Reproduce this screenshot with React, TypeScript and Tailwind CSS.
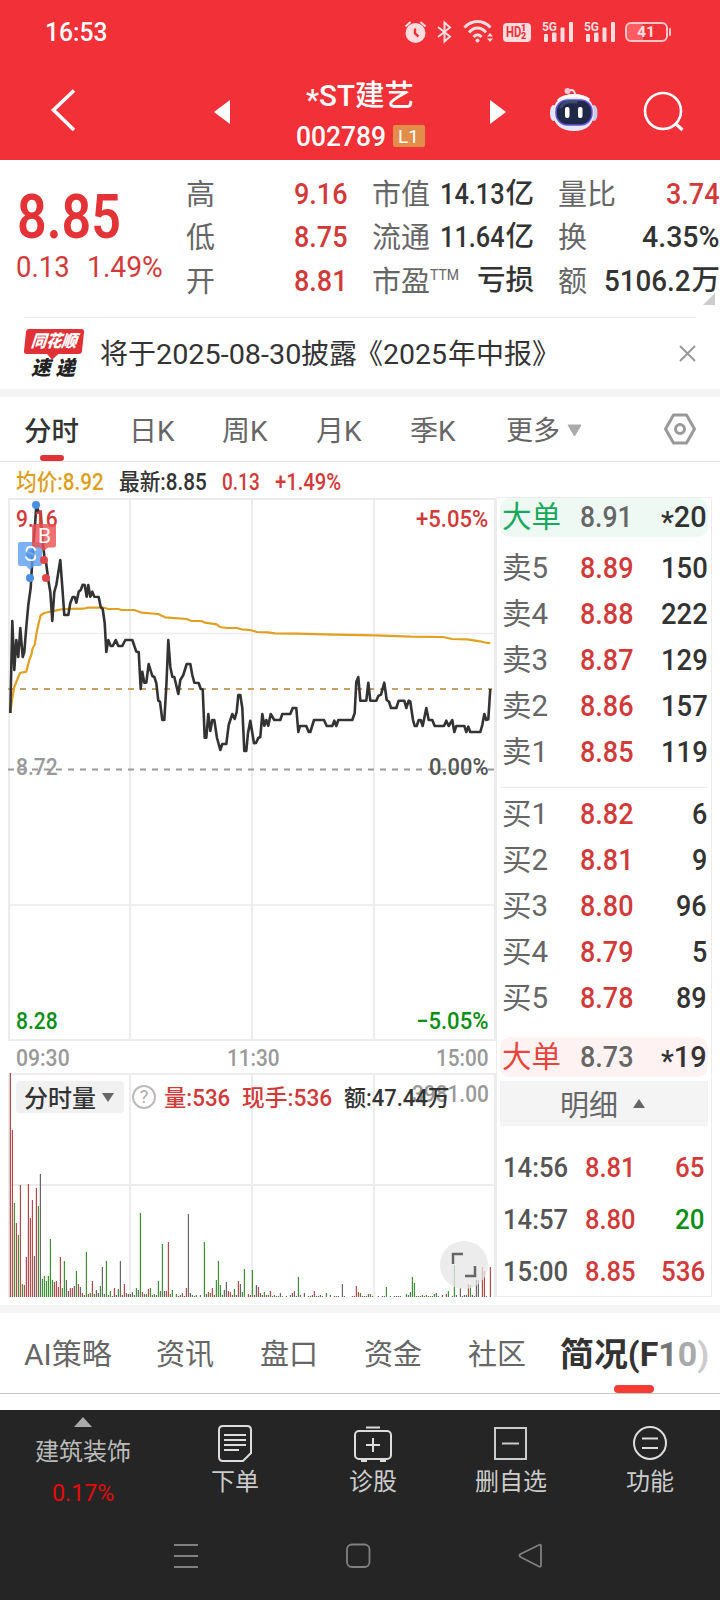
import { useLayoutEffect, useRef, type ReactNode } from "react";
import clsx from "clsx";

const RED = "text-[#d23a3a]";
const DARK = "text-[#333]";
const GREEN = "text-[#0b8f14]";

// Squeezes a piece of text into a fixed width, like the condensed digits of trading terminals
function Fit({ w, className, children }: { w: number; className?: string; children: ReactNode }) {
  const ref = useRef<HTMLSpanElement>(null);

  useLayoutEffect(() => {
    const el = ref.current;
    if (el) el.style.transform = `scaleX(${w / el.offsetWidth})`;
  }, [w, children]);

  return (
    <span className={clsx("inline-block shrink-0 whitespace-nowrap", className)} style={{ width: w }}>
      <span ref={ref} className="inline-block origin-left">
        {children}
      </span>
    </span>
  );
}

function Star() {
  return <span className="relative top-[0.15em]">*</span>;
}

function Signal() {
  return (
    <svg className="overflow-visible" width="32" height="24" viewBox="0 0 32 24" fill="#ffdcde">
      <text x="0" y="11" fontSize="13.5" fontWeight="700" textLength="15" lengthAdjust="spacingAndGlyphs">
        5G
      </text>
      <rect x="2" y="14" width="4" height="8" rx="1" />
      <rect x="10" y="12.500" width="4.500" height="9.500" rx="1" />
      <rect x="18.500" y="7.500" width="4" height="14.500" rx="1" />
      <rect x="27" y="2" width="4" height="20" rx="1" />
    </svg>
  );
}

function StatusBar() {
  return (
    <div className="flex h-16 items-center pl-[45px] text-white">
      <Fit w={62} className="pt-0.5 text-[25px] font-medium">16:53</Fit>
      <div className="ml-[297px] flex items-center">
        <svg width="23" height="24" viewBox="0 0 23 24" fill="none" stroke="#ffdcde">
          <circle cx="11.500" cy="13" r="10" fill="#ffdcde" stroke="none" />
          <path d="M1.500 6.500 6.500 2M21.500 6.500 16.500 2" strokeWidth="2.200" />
          <path d="M11 8.500V13.500L14.500 16.500" stroke="#f23038" strokeWidth="2.400" />
        </svg>
        <svg className="ml-[9px]" width="17" height="24" viewBox="0 0 17 24" fill="none" stroke="#ffdcde" strokeWidth="2">
          <path d="M2 7 14 16.500 8.500 21.500V2.500L14 7.500 2 17" />
        </svg>
        <svg className="ml-2.5" width="32" height="24" viewBox="0 0 32 24" fill="none" stroke="#ffdcde" strokeWidth="3">
          <path d="M1.500 7.500C9-.5 20-.5 27.500 7.500M6 12.500C11 6.500 18 6.500 23 12.500M10.500 17C13 14 16 14 18.500 17" />
          <circle cx="14.500" cy="20.500" r="2" fill="#ffdcde" stroke="none" />
          <path d="M24 16.500 27 13 30 16.500ZM24 18.500 27 22 30 18.500Z" fill="#ffdcde" stroke="none" />
        </svg>
        <div className="ml-2 flex h-[19px] w-7 items-center rounded bg-[#ffdcde] pl-[3px] text-[#f23038]">
          <Fit w={15} className="text-[15px] font-bold leading-none">HD</Fit>
          <span className="flex flex-col text-[9px] font-black leading-[8px]">
            <span>1</span>
            <span>2</span>
          </span>
        </div>
        <div className="ml-[11px] flex gap-2.5">
          <Signal />
          <Signal />
        </div>
        <div className="ml-[9px] flex items-center">
          <div className="flex h-5 w-[43px] items-center rounded-md border-2 border-[#ffc4c7] bg-linear-to-r from-[#ff5c63] from-40% to-transparent to-40% pl-2.5">
            <Fit w={18} className="text-[15px] font-bold leading-none text-[#ffdcde]">41</Fit>
          </div>
          <div className="ml-px h-2 w-0.5 rounded bg-[#ffc4c7]" />
        </div>
      </div>
    </div>
  );
}

function Robot() {
  return (
    <svg width="50" height="46" viewBox="0 0 50 46" fill="none">
      <path d="M20 3.500C24 2 26 4 26 8" stroke="#ffe4ea" strokeWidth="2" />
      <circle cx="18.500" cy="4" r="3" fill="#ffc8d4" />
      <ellipse cx="4.500" cy="26" rx="3.500" ry="8" fill="#e4e6ff" />
      <ellipse cx="45" cy="26" rx="3.500" ry="8" fill="#c9c8f6" />
      <path d="M25 7C38 7 45 15 45 26S38 44 25 44 4 37 4 26 12 7 25 7Z" fill="#e6e8fb" />
      <path d="M9 14C15 7.500 33 7 40 13" stroke="#fff" strokeWidth="3" />
      <rect x="7" y="13" width="36" height="25" rx="11.500" fill="#1f2947" stroke="#6552d8" strokeWidth="1.500" />
      <path d="M12 20C14 15 20 14 27 15" stroke="#3d4c6e" strokeWidth="3" strokeLinecap="round" />
      <rect x="16" y="20" width="4.500" height="11" rx="2" fill="#fff" />
      <rect x="29" y="20" width="4.500" height="11" rx="2" fill="#fff" />
    </svg>
  );
}

function TitleBar() {
  return (
    <div className="flex h-24 items-start text-white">
      <svg className="mt-6 ml-[50px]" width="26" height="44" viewBox="0 0 26 44" fill="none" stroke="#fff" strokeWidth="3.600">
        <path d="M24 2.500 3.500 22 24 42" />
      </svg>
      <svg className="mt-9 ml-[138px]" width="16" height="24" viewBox="0 0 16 24" fill="#fff">
        <path d="M16 0V24L0 12Z" />
      </svg>
      <div className="flex w-[260px] flex-col items-center">
        <div className="mt-[14px] text-[29px] leading-9 font-medium">
          <Fit w={108}>
            <Star />
            ST建艺
          </Fit>
        </div>
        <div className="mt-2 flex h-7 items-center">
          <Fit w={90} className="pt-0.5 text-[27px] leading-none font-medium">002789</Fit>
          <span className="ml-[7px] flex h-[22px] w-8 items-center justify-center rounded-xs bg-[#e38d4b] text-[19px] leading-none">
            L1
          </span>
        </div>
      </div>
      <svg className="mt-9" width="16" height="24" viewBox="0 0 16 24" fill="#fff">
        <path d="M0 0V24L16 12Z" />
      </svg>
      <div className="mt-[23px] ml-[43px]">
        <Robot />
      </div>
      <svg className="mt-[26px] ml-[44px]" width="42" height="42" viewBox="0 0 42 42" fill="none" stroke="#fff" strokeWidth="2.600">
        <circle cx="20" cy="21" r="18" />
        <path d="M32.500 33.500 39.500 40" strokeWidth="3.200" />
      </svg>
    </div>
  );
}

type Cell = { label: string; sup?: string; num?: string; w?: number; unit?: string; red?: boolean };

const quoteColumns: Cell[][] = [
  [
    { label: "高", num: "9.16", w: 54, red: true },
    { label: "低", num: "8.75", w: 54, red: true },
    { label: "开", num: "8.81", w: 54, red: true },
  ],
  [
    { label: "市值", num: "14.13", w: 65, unit: "亿" },
    { label: "流通", num: "11.64", w: 65, unit: "亿" },
    { label: "市盈", sup: "TTM", unit: "亏损" },
  ],
  [
    { label: "量比", num: "3.74", w: 54, red: true },
    { label: "换", num: "4.35%", w: 78 },
    { label: "额", num: "5106.2", w: 87, unit: "万" },
  ],
];

function Quote() {
  return (
    <div className="relative flex h-[157px] pl-4">
      <div className="w-[170px] pt-6">
        <Fit w={104} className="ml-px text-[62px] leading-[66px] font-semibold text-[#e33337]">8.85</Fit>
        <div className={clsx("-mt-px flex gap-[17px] text-[29px] leading-9", RED)}>
          <Fit w={54}>0.13</Fit>
          <Fit w={76}>1.49%</Fit>
        </div>
      </div>
      <div className="flex gap-6 pt-3">
        {quoteColumns.map((cells, i) => (
          <div key={i} className="w-[162px]">
            {cells.map((c) => (
              <div key={c.label} className="flex h-[43.5px] items-center justify-between text-[29px] leading-none">
                <span className="flex pt-[3px] text-[#666]">
                  {c.label}
                  {c.sup && <Fit w={29} className="text-[15px] leading-none">{c.sup}</Fit>}
                </span>
                <span className={clsx("flex items-center font-medium", c.red ? RED : DARK)}>
                  {c.num && <Fit w={c.w ?? 54} className="text-[30px]">{c.num}</Fit>}
                  <span className="text-[28.5px]">{c.unit}</span>
                </span>
              </div>
            ))}
          </div>
        ))}
      </div>
      <svg className="absolute top-[133px] right-[5px]" width="12" height="12" viewBox="0 0 12 12" fill="#ccc">
        <path d="M12 0V12H0Z" />
      </svg>
    </div>
  );
}

function News() {
  return (
    <div className="mx-6 flex h-[72px] items-center border-t border-[#ebebeb]">
      <div className="flex w-[60px] flex-col pl-px">
        <div className="relative flex h-[25px] w-[58px] -skew-x-6 items-center justify-center rounded-[3px] bg-[#e03236]">
          <Fit w={46} className="text-[17px] leading-none font-black text-white italic">同花顺</Fit>
          <span className="absolute -bottom-1 left-[25px] size-2 rotate-45 bg-[#e03236]" />
        </div>
        <Fit w={44} className="mt-1 ml-1.5 text-[20px] leading-5 font-black text-[#222] italic">速 递</Fit>
      </div>
      <span className="ml-4 flex pt-[3px] text-[28px] leading-none text-[#333]">
        将于<Fit w={145}>2025-08-30</Fit>披露<span className="-ml-0.5">《</span>
        <Fit w={64}>2025</Fit>
        <span className="pl-px">年中报》</span>
      </span>
      <svg className="ml-auto" width="17" height="17" viewBox="0 0 17 17" stroke="#999" strokeWidth="2">
        <path d="M1 1 16 16M16 1 1 16" />
      </svg>
    </div>
  );
}

function PeriodTabs() {
  return (
    <div className="relative flex h-[65px] items-center border-b border-[#e6e6e6] pt-0.5 pl-6 text-[28px] leading-none text-[#666]">
      <span className="w-[105px] pt-[3px] text-[27.5px] font-medium text-[#333]">分时</span>
      <span className="w-[93px] pt-[3px]">日K</span>
      <span className="w-[94px] pt-[3px]">周K</span>
      <span className="w-[94px] pt-[3px]">月K</span>
      <span className="w-[96px] pt-[3px]">季K</span>
      <span className="pt-[3px] text-[27px]">更多</span>
      <svg className="ml-[7px]" width="15" height="13" viewBox="0 0 15 13" fill="#aaa" stroke="#aaa" strokeLinejoin="round">
        <path d="M1 1H14L7.500 12Z" />
      </svg>
      <svg className="mr-6 mb-0.5 ml-auto" width="32" height="32" viewBox="0 0 32 32" fill="none" stroke="#999" strokeWidth="3" strokeLinejoin="round">
        <path d="M9.500 2H22.500L30.500 16 22.500 30H9.500L1.500 16Z" />
        <circle cx="16" cy="16" r="4.500" />
      </svg>
      <span className="absolute bottom-0 left-10 h-1.5 w-6 rounded-full bg-[#e03236]" />
    </div>
  );
}

// Minute prices and running average, in chart coordinates
const pricePoints =
  "10.3,713 12.3,621 14.3,670 16.3,640 18.3,657 20.3,628 22.7,657 24.3,652 26.3,627 28.3,605 30.7,588 32.7,553 34.7,530 36.3,505 38.7,512 40.7,512 42.3,537 44.3,556 46,562 48.3,580 50.3,592 52.3,621 54.3,592 56.3,585 60.3,560 62.3,587 64.3,615 68.3,615 70.3,603 72.7,597 74.7,597 76.3,602.7 78.7,591.7 80.7,590 82.7,584.7 84.7,585 86.7,596.7 88.3,585 90.3,596.7 92.3,591.7 94.3,596.7 98.7,597 100.7,607 102.7,609 104.7,623 106.3,652 108.3,640 110.7,646 112.7,646 115.7,640 118.3,646 122.3,646 125.3,640 132.3,640 136.3,651.7 138.7,652 140.7,689 142.3,671.7 144.3,682.7 146.3,682.7 148.7,664 152.3,676 154.3,677 156.3,683 158.3,700.7 160,701.7 162.3,720 164.3,720 166.3,686.7 168.3,640 170.3,666.7 172.3,676.7 174.3,677 178.3,694 180.3,680 183.3,675 186.7,664 190.3,664 192.3,675 194.3,682.7 198.7,683 200.7,689 202.7,689.3 204.7,737.7 206.3,737.7 208.3,714 210.3,731 212.3,720 214.3,720 217,738 220.3,750 222.3,744 226.3,744 228.7,725 232.3,714 234.7,719 236.7,711.7 238.3,695 240.3,695 242.3,708 244.3,751 246.3,751 248,733 250.3,720.7 254,743.3 256,743 258.3,738 260.3,737 262.3,714 264.3,725.7 266.3,720 268.3,725.7 270.7,714 274.3,720 280.3,720 282.3,714 290.3,714 292.7,708 296.3,708 298.3,732 300,726 306.3,726 308.7,732 310.3,732 314,720 324,720 326.7,726 332.3,726 334.3,720.7 336.3,726 338.3,720 352.3,720 354.7,713 356.3,681.7 358.3,677 360.3,700.7 366.3,700.7 368.3,682.7 370.3,700.7 376.3,700.7 378.3,696 381,694.7 384.3,682.7 386.7,700 389,701.7 391,708 396.3,708 398.7,700.7 404.3,700.7 406.3,708 408.7,700.7 410.3,701.7 413,720 414.7,726 416.7,726 418.7,720 420.7,720 422.7,726 426.3,708 428.7,720 432.3,720 434.7,726 444,726 446.3,720.7 448.7,726 452.3,720 454.3,732 456.3,726 464.3,726 466.3,732 468.3,726.7 470.3,732 480.3,732 482.3,725 484.3,714 486.3,720 488.3,719.3 490.3,689";
const averagePoints =
  "10.3,713 12.3,698 14.3,687 16.3,682 20,673 26.3,671.7 29.3,660 31.3,655 32.7,648 34.7,645 36.7,632 38.7,623 40.7,615.3 44.3,613 51.7,611.3 63.3,609 83.3,608.7 87.3,607.7 104,607.7 108.3,609 118.3,609 121.7,610 134.3,610 141.7,612.7 158.3,614 165,617.3 186.7,619 191.7,621 201.7,621 205,622.7 216.7,624.3 220,627 226.7,628 236.7,628 241.7,629.3 250,630 257,632 268,632.3 275,633.3 297,633.7 334,634.7 375,635.3 411,636.7 443,637 452,639 467,639.3 480,641.3 487,643 490.3,643";

function PriceChart() {
  return (
    <div className="relative h-[544px] text-[23px] leading-6">
      <svg className="block" width="496" height="544" viewBox="0 497 496 544" fill="none">
        <g stroke="#ececec" strokeWidth="2">
          <path d="M8 499H496M8 1040H496M9 499V1041M495 499V1041M130 499V1041M252 499V1041M374 499V1041" />
          <path d="M9 633.500H495M9 905H495" strokeWidth="1.500" />
        </g>
        <path d="M8 769.500H495" stroke="#999" strokeWidth="1.800" strokeDasharray="6 6" />
        <path d="M8 689H492" stroke="#c9a063" strokeWidth="1.800" strokeDasharray="6 6" />
        <polyline points={averagePoints} stroke="#e0a020" strokeWidth="2.200" strokeLinejoin="round" />
        <polyline points={pricePoints} stroke="#333" strokeWidth="2.600" strokeLinejoin="round" />
      </svg>
      <Fit w={42} className={clsx("absolute top-[11px] left-4 font-medium", RED)}>9.16</Fit>
      <Fit w={72} className={clsx("absolute top-[11px] right-2 font-medium", RED)}>+5.05%</Fit>
      <Fit w={42} className="absolute top-[259px] left-4 font-medium text-[#999]">8.72</Fit>
      <Fit w={60} className="absolute top-[259px] right-[7px] font-medium text-[#555]">0.00%</Fit>
      <Fit w={42} className={clsx("absolute top-[513px] left-4 font-medium", GREEN)}>8.28</Fit>
      <Fit w={72} className={clsx("absolute top-[513px] right-2 font-medium", GREEN)}>−5.05%</Fit>
      {/* Buy and sell markers */}
      <svg className="absolute top-0 left-0" width="70" height="90" viewBox="0 497 70 90">
        <path d="M20 542H40Q42 542 42 544V564Q42 566 40 566H34L30 570 26 566H20Q18 566 18 564V544Q18 542 20 542Z" fill="#5b9df0" fillOpacity=".8" />
        <path d="M34 524H54Q56 524 56 526V545Q56 547.500 54 547.500H48L44 551 40 547.500H34Q32 547.500 32 545V526Q32 524 34 524Z" fill="#eb5054" fillOpacity=".82" />
        <g fill="#4a90e2">
          <circle cx="36" cy="505" r="4" />
          <circle cx="30" cy="578" r="4" />
        </g>
        <g fill="#e0454a">
          <circle cx="44" cy="560" r="4" />
          <circle cx="46" cy="578" r="4" />
        </g>
        <text x="44.500" y="543" fontSize="21" fill="#fff" textAnchor="middle">B</text>
        <text x="30.500" y="561" fontSize="21" fill="#fff" textAnchor="middle">S</text>
        <circle cx="30.500" cy="554" r="4.500" fill="#4a90e2" fillOpacity=".75" />
      </svg>
    </div>
  );
}

// Minute volumes: r up, g down, k flat, followed by the bar height
const volumes =
  "r224 r167 g94 r74 g62 r112 g13 r12 r40 r113 r79 r97 k41 r109 g91 k123 g18 g21 g16 g21 g58 g17 r15 r16 r10 r40 g9 g36 k17 k6 r9 r9 k11 g26 r13 k10 r4 k2 g45 r3 g4 r16 g3 k7 k4 g11 k30 g3 g36 r2 g6 k1 r9 k2 g8 k36 r2 r13 k4 k3 k3 k5 g2 g9 k7 g84 r5 k3 g3 r8 g9 g2 g3 k2 g16 k6 g53 k6 r6 r55 g3 g7 k0 g3 r1 r2 k4 r1 r9 k83 k4 g2 k1 g2 k0 g2 k0 g55 k3 r5 g4 r9 r2 g17 g36 g12 g2 k7 k15 r6 r5 k2 g8 k2 r16 k13 g5 g28 k0 r3 r2 g27 r2 k12 r10 k4 r2 g5 r2 g2 r6 r1 g2 g1 g1 k4 g1 k0 r1 k0 k2 r4 k6 k1 g20 r2 k0 k4 k0 g1 g1 r2 r6 k1 k1 k2 k1 k0 g4 k0 k2 k0 r1 g1 r1 k0 k13 k1 k0 k0 k0 r1 r1 r11 r5 g4 k1 k1 k1 r3 g3 k1 k0 k0 r1 k0 r1 r1 g10 k0 g1 k0 k1 k1 k1 k1 k0 k0 g3 g2 k5 g20 g14 g1 r1 g1 r2 g1 g2 r1 g1 g1 g3 k4 g1 k0 k2 k0 r3 g6 k0 r1 g32 k2 k0 k9 k1 k2 g2 r13 g12 k2 r1 k17 k17 k0 r30 r26 g1 k0 r30".split(" ");

const barColors: Record<string, string> = { r: "#b8484a", g: "#3d9236", k: "#666" };

function VolumeChart() {
  return (
    <div className="relative h-[225px] text-[23px] leading-6">
      <svg className="block" width="496" height="225" viewBox="0 1072 496 225" fill="none">
        <path d="M8 1074H496M9 1185H495M9 1074V1297M495 1074V1297M130 1074V1297M252 1074V1297M374 1074V1297" stroke="#ececec" strokeWidth="2" />
        {volumes.map((v, i) => (
          <rect
            key={i}
            x={9.8 + i * 2}
            y={1297 - Number(v.slice(1))}
            width="1.200"
            height={Number(v.slice(1))}
            fill={barColors[v[0]]}
          />
        ))}
      </svg>
      <Fit w={77} className="absolute top-[11px] right-[7px] font-medium text-[#999]">3981.00</Fit>
      <div className="absolute top-[9px] left-4 flex items-center font-medium">
        <div className="flex h-8 w-[108px] items-center rounded bg-[#f1f1f1] pl-2 text-[24px] text-[#333]">
          <span className="pt-[3px]">分时量</span>
          <svg className="ml-[6px]" width="12" height="9" viewBox="0 0 12 9" fill="#666">
            <path d="M0 0H12L6 9Z" />
          </svg>
        </div>
        <span className="ml-2 flex size-6 items-center justify-center rounded-full border-2 border-[#bbb] text-[18px] leading-none font-normal text-[#aaa]">
          ?
        </span>
        <Fit w={66} className={clsx("ml-2 pt-[3px]", RED)}>量:536</Fit>
        <Fit w={90} className={clsx("ml-3 pt-[3px]", RED)}>现手:536</Fit>
        <Fit w={106} className="ml-3 pt-[3px] text-[#333]">额:47.44万</Fit>
      </div>
      <svg className="absolute top-[169px] left-[440px]" width="48" height="48" viewBox="0 0 48 48" fill="none">
        <circle cx="24" cy="24" r="24" fill="#e6e6e6" fillOpacity=".75" />
        <path d="M13 23V13H23M25 35H35V25" stroke="#666" strokeWidth="2.500" />
      </svg>
    </div>
  );
}

const asks = [["卖5", "8.89", "150"], ["卖4", "8.88", "222"], ["卖3", "8.87", "129"], ["卖2", "8.86", "157"], ["卖1", "8.85", "119"]];
const bids = [["买1", "8.82", "6"], ["买2", "8.81", "9"], ["买3", "8.80", "96"], ["买4", "8.79", "5"], ["买5", "8.78", "89"]];
const ticks = [["14:56", "8.81", "65"], ["14:57", "8.80", "20"], ["15:00", "8.85", "536"]];

function BookRow({ row }: { row: string[] }) {
  const [label, price, qty] = row;
  return (
    <div className="flex h-[46px] items-center pt-0.5 pr-px pl-0.5 text-[29.5px] leading-none">
      <span className="flex w-[78px] text-[#666]">
        {label[0]}
        <Fit w={17}>{label[1]}</Fit>
      </span>
      <Fit w={54} className={clsx("font-medium", RED)}>{price}</Fit>
      <Fit w={qty.length * 15.5} className={clsx("ml-auto font-medium", DARK)}>{qty}</Fit>
    </div>
  );
}

function OrderBook() {
  return (
    <div className="h-[800px] w-[216px] border border-[#ececec] pr-[3px] pl-[3px]">
      <div className="flex h-[39px] items-center rounded-[10px] bg-[#eff9f4] pt-px pr-px pl-0.5 text-[29.5px] leading-none">
        <span className="w-[78px] text-[#16a95c]">大单</span>
        <Fit w={53} className="font-medium text-[#666]">8.91</Fit>
        <Fit w={46} className={clsx("ml-auto font-medium", DARK)}>
          <Star />
          20
        </Fit>
      </div>
      <div className="pt-2">{asks.map((r) => <BookRow key={r[0]} row={r} />)}</div>
      <div className="mt-3 border-t border-[#ececec] pt-[3px]">{bids.map((r) => <BookRow key={r[0]} row={r} />)}</div>
      <div className="mt-4 flex h-10 items-center rounded-[10px] bg-[#fef3f2] pt-px pr-px pl-0.5 text-[29.5px] leading-none">
        <span className="w-[78px] text-[#e8443c]">大单</span>
        <Fit w={54} className="font-medium text-[#666]">8.73</Fit>
        <Fit w={46} className={clsx("ml-auto font-medium", DARK)}>
          <Star />
          19
        </Fit>
      </div>
      <div className="mt-1 flex h-[45px] items-center bg-[#f4f4f4] pl-[60px] text-[29px] leading-none text-[#666]">
        <span className="pt-1.5">明细</span>
        <svg className="ml-[15px]" width="12" height="9" viewBox="0 0 12 9" fill="#666">
          <path d="M6 0 12 9H0Z" />
        </svg>
      </div>
      <div className="pt-4">
        {ticks.map(([time, price, qty]) => (
          <div key={time} className="flex h-[52px] items-center pr-[3px] pl-[3px] text-[28px] leading-none">
            <Fit w={65} className="font-medium text-[#555]">{time}</Fit>
            <Fit w={51} className={clsx("ml-[17px] font-medium", RED)}>{price}</Fit>
            <Fit w={qty.length * 14.8} className={clsx("ml-auto font-medium", qty === "20" ? GREEN : RED)}>{qty}</Fit>
          </div>
        ))}
      </div>
    </div>
  );
}

function SectionTabs() {
  return (
    <div className="relative flex h-[81px] items-center border-b border-[#c8c8c8] pt-1 pl-6 text-[29px] leading-none text-[#666]">
      <span className="w-[132px]"><Fit w={88}>AI策略</Fit></span>
      <span className="w-[104px]">资讯</span>
      <span className="w-[104px]">盘口</span>
      <span className="w-[104px]">资金</span>
      <span className="w-[92px]">社区</span>
      {/* The last tab fades out towards the screen edge */}
      <Fit w={149} className="text-[33px] leading-10 font-bold text-[#333]">
        简况(F<span className="text-[#777]">1</span>
        <span className="text-[#aaa]">0</span>
        <span className="text-[#ccc]">)</span>
      </Fit>
      <span className="absolute bottom-0 left-[614px] h-2 w-10 rounded-full bg-[#f53b33]" />
    </div>
  );
}

function BottomBar() {
  return (
    <div className="h-[190px] bg-[#252525] text-[24px] leading-7 text-[#ccc]">
      <div className="flex h-[110px]">
        <div className="flex w-[166px] flex-col items-center pt-[7px]">
          <svg width="18" height="10" viewBox="0 0 18 10" fill="#aaa">
            <path d="M9 0 18 10H0Z" />
          </svg>
          <span className="mt-[11px] text-[#bbb]">建筑装饰</span>
          <Fit w={62} className="mt-[13px] text-[#e60a0a]">0.17%</Fit>
        </div>
        <div className="flex w-[138px] flex-col items-center pt-[15px]">
          <svg width="34" height="38" viewBox="0 0 34 38" fill="none" stroke="#ddd" strokeWidth="2">
            <path d="M5 1H29Q33 1 33 5V28L25 36H5Q1 36 1 32V5Q1 1 5 1ZM6 10H28M6 15H28M6 20H28M6 25H21" />
          </svg>
          <span className="mt-[5px]">下单</span>
        </div>
        <div className="flex w-[138px] flex-col items-center pt-[15px]">
          <svg width="40" height="38" viewBox="0 0 40 38" fill="none" stroke="#ddd" strokeWidth="2">
            <rect x="2" y="6" width="36" height="28" rx="4" />
            <path d="M13 2.500H27M13 20H27M20 13V27M8 36H14M27 36H33" />
          </svg>
          <span className="mt-[5px]">诊股</span>
        </div>
        <div className="flex w-[138px] flex-col items-center pt-[15px]">
          <svg width="34" height="38" viewBox="0 0 34 38" fill="none" stroke="#ccc" strokeWidth="2">
            <path d="M1 3H32V34H1ZM8 18.500H25" />
          </svg>
          <span className="mt-[5px]">删自选</span>
        </div>
        <div className="flex w-[140px] flex-col items-center pt-[15px]">
          <svg width="36" height="38" viewBox="0 0 36 38" fill="none" stroke="#ddd" strokeWidth="2">
            <circle cx="18" cy="18" r="16" />
            <path d="M10 13.500H26M10 23H26" />
          </svg>
          <span className="mt-[5px]">功能</span>
        </div>
      </div>
      <div className="flex items-center pt-[23px] pl-[173px]">
        <svg width="26" height="26" viewBox="0 0 26 26" stroke="#808080" strokeWidth="1.800">
          <path d="M1 2H25M1 13H25M1 24H25" />
        </svg>
        <svg className="ml-[146px]" width="26" height="26" viewBox="0 0 26 26" fill="none" stroke="#808080" strokeWidth="1.800">
          <rect x="2" y="1.500" width="22.500" height="22.500" rx="5" />
        </svg>
        <svg className="ml-[146px]" width="26" height="26" viewBox="0 0 26 26" fill="none" stroke="#808080" strokeWidth="1.800" strokeLinejoin="round">
          <path d="M22 2Q24 1 24 3V22Q24 24.500 22 23.500L3.500 14Q1.500 12.500 3.500 11Z" />
        </svg>
      </div>
    </div>
  );
}

export default function App() {
  return (
    <div className="h-[1600px] w-[720px] overflow-hidden bg-white font-[Roboto,'Noto_Sans_CJK_SC',sans-serif]">
      <div className="h-40 bg-[#f23038]">
        <StatusBar />
        <TitleBar />
      </div>
      <Quote />
      <News />
      <div className="h-2 bg-[#f4f4f4]" />
      <PeriodTabs />
      <div className="flex h-[35px] items-center pt-[5px] pl-4 text-[23px] leading-none">
        <Fit w={88} className="font-medium text-[#dc9f1e]">均价:8.92</Fit>
        <Fit w={88} className="ml-[15px] font-medium text-[#333]">最新:8.85</Fit>
        <Fit w={38} className={clsx("ml-[15px] font-medium", RED)}>0.13</Fit>
        <Fit w={66} className={clsx("ml-[15px] font-medium", RED)}>+1.49%</Fit>
      </div>
      <div className="flex">
        <div className="w-[496px]">
          <PriceChart />
          <div className="flex h-[31px] items-center justify-between pt-1 pr-[7px] pl-4 text-[23.5px] leading-none font-medium text-[#999]">
            <Fit w={54}>09:30</Fit>
            <Fit w={53}>11:30</Fit>
            <Fit w={53}>15:00</Fit>
          </div>
          <VolumeChart />
        </div>
        <OrderBook />
      </div>
      <div className="mt-2 h-2 bg-[#f4f4f4]" />
      <SectionTabs />
      <div className="h-4" />
      <BottomBar />
    </div>
  );
}
